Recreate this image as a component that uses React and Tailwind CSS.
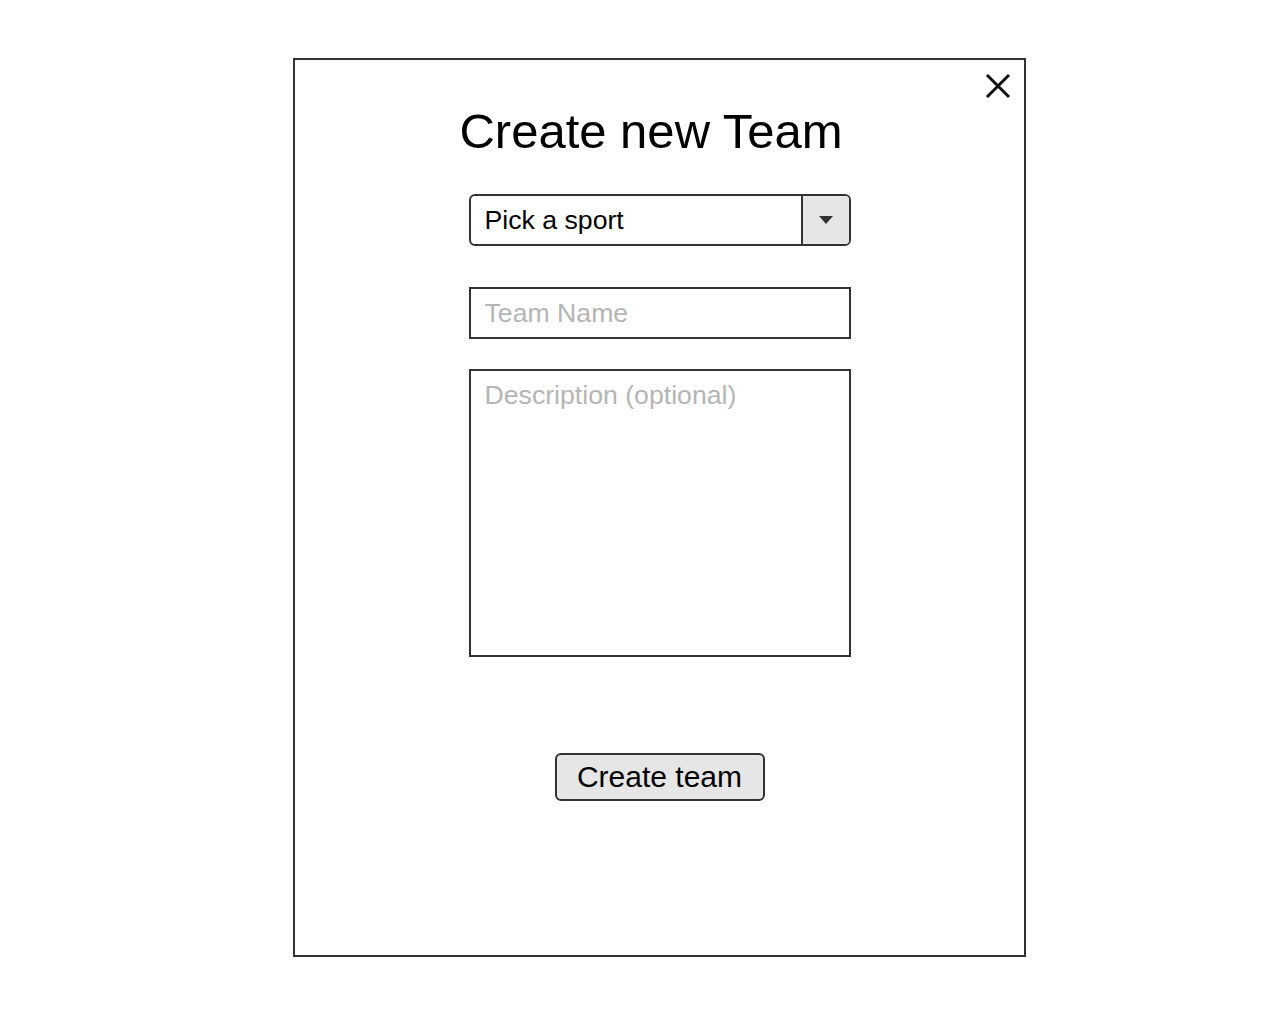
export default function App() {
  return (
    <div className="min-h-screen bg-white font-['Liberation_Sans',Arial,sans-serif] text-black">
      <div className="pt-[58px] pl-[293px]">
        <div className="relative flex h-[899px] w-[733px] flex-col items-center border-2 border-[#333] bg-white">
          {/* close */}
          <button className="absolute right-[12px] top-[12px] h-[28px] w-[28px]">
            <svg viewBox="0 0 28 28" className="h-[28px] w-[28px]">
              <path d="M3 3 L25 25 M25 3 L3 25" stroke="#111" strokeWidth="3" strokeLinecap="butt" />
            </svg>
          </button>

          <h1 className="mt-[44px] pr-[17px] text-[49px] font-normal leading-[55px]">Create new Team</h1>

          <div className="mt-[35px] flex h-[52px] w-[382px] items-stretch overflow-hidden rounded-md border-2 border-[#333]">
            <div className="flex flex-1 items-center pl-[14px] pb-[1px] text-[26.67px]">Pick a sport</div>
            <div className="flex w-[48px] items-center justify-center border-l-2 border-[#333] bg-[#e6e6e6]">
              <svg viewBox="0 0 14 8" className="h-[8px] w-[14px]">
                <path d="M0 0 H14 L7 8 Z" fill="#333" />
              </svg>
            </div>
          </div>

          <input
            placeholder="Team Name"
            className="mt-[41px] h-[52px] w-[382px] border-2 border-[#333] pl-[14px] text-[26.67px] outline-none placeholder:text-[#b5b5b5]"
          />

          <textarea
            placeholder="Description (optional)"
            className="mt-[30px] h-[288px] w-[382px] resize-none border-2 border-[#333] pl-[14px] pt-[9px] text-[26.67px] leading-[30px] outline-none placeholder:text-[#b5b5b5]"
          />

          <button className="mt-[96px] h-[48px] w-[210px] rounded-md border-2 border-[#333] bg-[#e6e6e6] text-[30px] leading-none">
            Create team
          </button>
        </div>
      </div>
    </div>
  );
}
